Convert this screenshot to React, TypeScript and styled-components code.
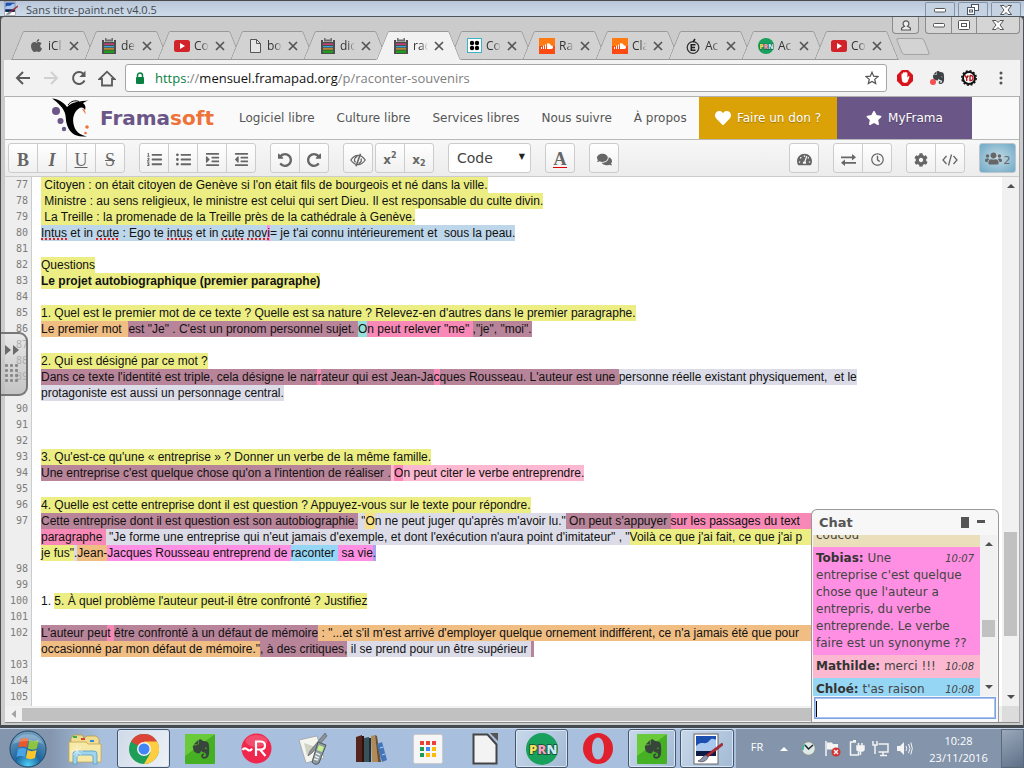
import React from 'react';
import styled, { createGlobalStyle, css } from 'styled-components';
import { FaHeart, FaStar, FaListOl, FaListUl, FaIndent, FaOutdent, FaComments, FaTachometerAlt, FaRegClock, FaCog, FaUsers, FaApple, FaEvernote } from 'react-icons/fa';

const sans = '"DejaVu Sans", sans-serif';
const system = '"Open Sans", "Noto Sans", sans-serif';

const GlobalStyle = createGlobalStyle`
  * { box-sizing: border-box; }
  body { margin: 0; overflow: hidden; font-family: ${sans}; }
  button, input, select { font: inherit; color: inherit; margin: 0; }
  button { padding: 0; border: 0; background: none; display: flex; align-items: center; justify-content: center; }
  a { color: inherit; text-decoration: none; }
  svg { display: block; flex: none; }
`;

const Desktop = styled.div`
  display: flex;
  flex-direction: column;
  height: 100vh;
  background: #4b4f57;
`;

/* ---------- outer title bar ---------- */

const TitleBar = styled.header`
  display: flex;
  align-items: center;
  height: 17px;
  padding: 0 3px;
  gap: 8px;
  border-top: 1px solid #4a4a4a;
  border-bottom: 1px solid #4f565e;
  background: linear-gradient(#b9c6d8, #cddcea);
  font: 11px/15px ${system};
  color: #45494f;
`;

const TitleText = styled.span`
  flex: 1;
  padding-top: 2px;
  white-space: nowrap;
`;

const TitleButtons = styled.div`
  display: flex;
  align-self: stretch;
  gap: 3px;
  padding-top: 1px;
`;

const TitleButton = styled.button`
  width: 30px;
  border: 1px solid #8593a8;
  border-bottom: 0;
  border-radius: 2px 2px 0 0;
  background: #c5d2e2;
`;

/* ---------- browser ---------- */

const Browser = styled.main`
  display: flex;
  flex-direction: column;
  flex: 1;
  min-height: 0;
  margin-right: 1px;
  padding: 0 3px 2px 3px;
  border-left: 1px solid #4c4c4c;
  border-bottom: 3px solid #44484f;
  border-radius: 4px 4px 0 0;
  background: #cbcbcb;
  position: relative;
`;

const TabStrip = styled.div`
  display: flex;
  align-items: flex-end;
  height: 43px;
  padding-left: 7px;
  position: relative;
`;

const Tab = styled.div<{ $active?: boolean }>`
  position: relative;
  z-index: ${p => (p.$active ? 2 : 0)};
  display: flex;
  align-items: center;
  flex: none;
  width: 85px;
  height: 29px;
  margin-right: -12px;
  padding-left: 17px;
  isolation: isolate;
  font: 12px/16px ${system};
  color: #333;
  &::before, &::after {
    content: '';
    position: absolute;
    z-index: -1;
    top: 0;
    bottom: 0;
    width: 48px;
    border-top: 1px solid #999;
    border-bottom: 1px solid ${p => (p.$active ? '#f2f2f2' : '#999')};
    background: ${p => (p.$active ? '#f2f2f2' : '#d2d2d2')};
  }
  &::before {
    left: 6px;
    border-left: 1px solid #999;
    border-top-left-radius: 2px;
    transform: skewX(-22deg);
  }
  &::after {
    right: 6px;
    border-right: 1px solid #999;
    border-top-right-radius: 2px;
    transform: skewX(22deg);
  }
`;

const TabLabel = styled.span`
  width: 15px;
  margin: 0 6px 0 4px;
  overflow: hidden;
  white-space: nowrap;
  mask-image: linear-gradient(90deg, #000 50%, transparent);
`;

const TabIcon = styled.span`
  display: flex;
  justify-content: center;
  width: 16px;
`;

const NewTab = styled.button`
  width: 28px;
  height: 17px;
  margin: 0 0 5px 12px;
  border: 1px solid #a4a4a4;
  border-radius: 3px;
  background: #d3d3d3;
  transform: skewX(22deg);
`;

const BrowserButtons = styled.div`
  position: absolute;
  top: 0;
  right: 0;
  display: flex;
  gap: 6px;
`;

const ButtonCluster = styled.div`
  display: flex;
  height: 17px;
  border: 1px solid #8b8b8b;
  border-top: 0;
  border-radius: 0 0 4px 4px;
  background: #d5d5d5;
  button + button { border-left: 1px solid #8b8b8b; }
`;

const ClusterButton = styled.button<{ $wide?: boolean }>`
  width: ${p => (p.$wide ? 43 : 25)}px;
`;

const NavBar = styled.div`
  display: flex;
  align-items: center;
  height: 36px;
  padding-left: 5px;
  background: #f2f2f2;
  color: #5a5a5a;
`;

const NavButton = styled.button`
  width: 28px;
  height: 28px;
`;

const AddressBar = styled.div`
  display: flex;
  align-items: center;
  flex: 1;
  height: 28px;
  margin-left: 4px;
  padding: 0 7px 0 9px;
  gap: 10px;
  border: 1px solid #a6a6a6;
  border-radius: 3px;
  background: #fff;
`;

const Url = styled.span`
  flex: 1;
  font: 13px/20px ${system};
  color: #808080;
  white-space: nowrap;
  b { font-weight: 400; color: #111; }
  i { font-style: normal; color: #0b8043; }
`;

const Extensions = styled.div`
  display: flex;
  padding: 0 3px 0 2px;
`;

const ExtButton = styled.button`
  width: 32px;
  height: 28px;
`;

/* ---------- web page ---------- */

const Page = styled.div`
  position: relative;
  display: flex;
  flex-direction: column;
  flex: 1;
  min-height: 0;
  margin-left: 1px;
  border-top: 1px solid #b0b0b0;
  border-bottom: 1px solid #888;
  border-right: 1px solid #aaa;
  background: #fff;
`;

const SiteHeader = styled.nav`
  display: flex;
  align-items: center;
  height: 43px;
  padding-left: 46px;
  border-bottom: 1px solid #b8b8b8;
  background: #fafafa;
  font: 12px/16px ${sans};
  color: #555;
  white-space: nowrap;
`;

const Brand = styled.a`
  display: flex;
  align-items: center;
  gap: 9px;
  height: 42px;
  margin-right: 25px;
  font: bold 20px/24px ${sans};
  color: #6a5687;
  span { color: #ee7338; }
`;

const SiteLink = styled.a`
  margin-right: 22px;
  &:last-of-type { margin-right: 0; }
`;

const SiteLinks = styled.div`
  display: flex;
  width: 460px;
`;

const Callout = styled.a<{ $color: string; $width: number }>`
  display: flex;
  align-items: center;
  justify-content: center;
  gap: 6px;
  width: ${p => p.$width}px;
  height: 42px;
  background: ${p => p.$color};
  color: #fff;
  text-shadow: 0 1px 1px rgba(0, 0, 0, 0.3);
`;

const Toolbar = styled.div`
  display: flex;
  align-items: center;
  height: 37px;
  padding: 0 3px;
  border-bottom: 1px solid #ccc;
  background: linear-gradient(#f7f7f7, #ececec);
  color: #666;
`;

const ToolGroup = styled.div<{ $gap?: number }>`
  display: flex;
  height: 30px;
  margin-right: ${p => p.$gap ?? 14}px;
  border: 1px solid #ccc;
  border-radius: 3px;
  background: linear-gradient(#fff, #f0f0f0);
  button + button { border-left: 1px solid #ccc; }
`;

const ToolButton = styled.button`
  width: 29px;
  padding-top: 3px;
  font: bold 12px/16px ${sans};
  &:first-child { width: 28px; }
  sup, sub { font-size: 8px; line-height: 8px; }
  sup { margin-bottom: 7px; }
  sub { margin-top: 8px; }
`;

const Letter = styled.span<{ $kind?: 'italic' | 'underline' | 'strike' }>`
  font: bold 18px/20px "Liberation Serif", serif;
  ${p => p.$kind === 'italic' && css`font-style: italic;`}
  ${p => p.$kind === 'underline' && css`font-weight: 400; text-decoration: underline 1px;`}
  ${p => p.$kind === 'strike' && css`font-weight: 400; text-decoration: line-through;`}
`;

const ColorLetter = styled.span`
  width: 14px;
  border-bottom: 1px solid #e00000;
  font: bold 18px/16px "Liberation Serif", serif;
  text-align: center;
`;

const StyleSelect = styled.label`
  position: relative;
  margin-right: 14px;
  select {
    width: 83px;
    height: 30px;
    padding: 0 8px;
    border: 1px solid #ccc;
    border-radius: 3px;
    background: #fff;
    color: #444;
    font: 14px/20px ${sans};
    appearance: none;
  }
  &::after {
    content: '▼';
    position: absolute;
    right: 6px;
    top: 8px;
    font: 8px/12px ${sans};
    color: #222;
    pointer-events: none;
  }
`;

const Spacer = styled.div`
  flex: 1;
`;

const UsersButton = styled.button`
  width: 37px;
  height: 30px;
  gap: 2px;
  border: 1px solid #bcc6cc;
  border-radius: 3px;
  background: radial-gradient(#c3dbe6, #6fa9c6);
  font: 11px/14px ${sans};
  span { padding-top: 5px; }
`;

/* ---------- editor ---------- */

const EditorArea = styled.div`
  display: flex;
  flex: 1;
  min-height: 0;
`;

const Editor = styled.div`
  flex: 1;
  min-width: 0;
  overflow: hidden;
  background: linear-gradient(90deg, #eee 26px, #ccc 26px, #ccc 27px, #fff 27px);
`;

const Line = styled.div`
  display: grid;
  grid-template-columns: 36px 1fr;
  min-height: 16px;
  font: 12px/16px "Liberation Sans", Arial, sans-serif;
  color: #111;
`;

const LineNumber = styled.span`
  padding-right: 13px;
  font: 10px/16px "DejaVu Sans Mono", monospace;
  color: #7c7c7c;
  text-align: right;
`;

const LineText = styled.div`
  white-space: pre;
`;

const Mark = styled.span<{ $color: string; $bold?: boolean }>`
  padding: 1px 0;
  background: ${p => p.$color};
  font-weight: ${p => (p.$bold ? 700 : 400)};
`;

const Misspelt = styled.span`
  text-decoration: underline dotted #e02020 2px;
  text-decoration-skip-ink: none;
`;

const ScrollY = styled.div<{ $thumbTop: number; $thumbHeight: number }>`
  flex: none;
  display: flex;
  flex-direction: column;
  align-items: center;
  justify-content: space-between;
  width: 17px;
  padding: 5px 0;
  background:
    linear-gradient(#c1c1c1, #c1c1c1) 50% ${p => p.$thumbTop}px / 13px ${p => p.$thumbHeight}px no-repeat,
    #f1f1f1;
`;

const ScrollX = styled.div`
  display: flex;
  align-items: center;
  height: 16px;
  padding-left: 5px;
  gap: 4px;
  background: #f1f1f1;
`;

const ThumbX = styled.div`
  flex: 1;
  height: 13px;
  margin-right: 8px;
  background: #c1c1c1;
`;

const ScrollCorner = styled.div`
  width: 17px;
  height: 16px;
  background: #dcdcdc;
`;

/* ---------- chat ---------- */

const Chat = styled.section`
  position: absolute;
  right: 20px;
  bottom: 0;
  width: 188px;
  border: 1px solid #999;
  border-bottom: 0;
  border-radius: 6px 6px 0 0;
  background: #f7f7f7;
  color: #444;
  font: 12px/17px ${sans};
`;

const ChatHeader = styled.header`
  display: flex;
  align-items: center;
  height: 25px;
  padding: 0 13px 0 7px;
  gap: 8px;
  h2 { flex: 1; margin: 0; font: bold 13px/18px ${sans}; color: #555; }
`;

const ChatBody = styled.div`
  display: flex;
  height: 161px;
  margin: 0 1px;
  overflow: hidden;
`;

const Messages = styled.div`
  flex: 1;
  margin-top: -11px;
`;

const Message = styled.p<{ $color: string }>`
  margin: 0;
  padding: 3px 6px 3px 3px;
  background: ${p => p.$color};
  b { color: #333; }
  time { float: right; font: italic 10px/17px ${sans}; }
`;

const ChatInput = styled.input`
  display: block;
  width: 182px;
  height: 22px;
  margin: 1px 0 3px 2px;
  padding: 0 1px;
  border: 1px solid #7ba3e2;
  outline: 1px solid #a9c4ef;
  outline-offset: -2px;
  background: #fff;
`;

const ChatInputRow = styled.label`
  position: relative;
  display: block;
  &::before {
    content: '';
    position: absolute;
    left: 4px;
    top: 4px;
    width: 1px;
    height: 16px;
    background: #000;
  }
`;

/* ---------- floating drawer handle ---------- */

const Drawer = styled.button`
  position: absolute;
  z-index: 3;
  left: 0;
  top: 315px;
  flex-direction: column;
  width: 27px;
  height: 64px;
  gap: 8px;
  padding-right: 4px;
  border: 2px solid #777;
  border-left: 0;
  border-radius: 0 9px 9px 0;
  background: linear-gradient(rgba(225, 225, 225, 0.5), rgba(185, 185, 185, 0.8));
`;

/* ---------- taskbar ---------- */

const Taskbar = styled.footer`
  display: flex;
  align-items: stretch;
  height: 40px;
  border-top: 1px solid #c4d4e6;
  background: linear-gradient(90deg, #8496ae 0, #8496ae 50px, #a8c0dd 100px);
`;

const TaskButton = styled.button<{ $open?: boolean; $front?: boolean; $width?: number }>`
  width: ${p => p.$width ?? 57}px;
  ${p => p.$open && css`
    margin: 0 2px;
    border: 1px solid #47576b;
    border-radius: 3px;
    background: linear-gradient(120deg, #c8d8ea, #a3bad5);
    box-shadow: inset 0 0 0 1px #d9e5f2;
  `}
  ${p => p.$front && css`background: linear-gradient(120deg, #cfd9e8, #eef2f8);`}
`;

const Tray = styled.div`
  display: flex;
  align-items: center;
  flex: 1;
  padding-left: 14px;
  background: #8394ab;
  color: #fff;
  font: 11px/17px ${system};
`;

const Language = styled.button`
  width: 14px;
  height: 16px;
  margin: 0 8px 4px 0;
`;

const TrayButton = styled.button`
  width: 24px;
`;

const Clock = styled.time`
  flex: 1;
  text-align: center;
  white-space: pre;
`;

const ShowDesktop = styled.button`
  align-self: stretch;
  width: 23px;
  border: 1px solid #5b6879;
  background: linear-gradient(150deg, #9aa8ba, #5f7087);
`;

/* ---------- icons ---------- */

const Pad = () => (
  <svg width="14" height="16" viewBox="0 0 14 16">
    <path d="M0 2h14v14H0z" fill="#4d4d4d" />
    <path d="M2 2h10v2H2z" fill="#cfcfcf" />
    <path d="M3 0h1.500v1.500h5V0H11v3.500H3z" fill="#6d6d6d" />
    <path d="M2 5.500h10v1.300H2z" fill="#e0407f" />
    <path d="M2 8h10v1.300H2z" fill="#35a8e0" />
    <path d="M2 10.300h10v1.200H2z" fill="#e8a020" />
    <path d="M2 12.500h10V15H2z" fill="#1f9c1f" />
  </svg>
);
const YouTube = () => (
  <svg width="16" height="12" viewBox="0 0 16 12">
    <rect width="16" height="12" rx="2.500" fill="#d2232a" />
    <path d="M6 3l5 3-5 3z" fill="#fff" />
  </svg>
);
const Sheet = () => (
  <svg width="11" height="14" viewBox="0 0 11 14" fill="#e6e6e6" stroke="#555">
    <path d="M.5.5h6l4 4v9H.5z" />
    <path d="M6.500.5v4h4" fill="none" />
  </svg>
);
const Dots4 = () => (
  <svg width="15" height="15" viewBox="0 0 15 15">
    <rect x=".5" y=".5" width="14" height="14" fill="#fff" stroke="#3fb3c2" />
    <circle cx="5" cy="5" r="2.200" /><circle cx="10" cy="5" r="2.200" />
    <circle cx="5" cy="10" r="2.200" /><circle cx="10" cy="10" r="2.200" />
  </svg>
);
const SoundCloud = () => (
  <svg width="16" height="16" viewBox="0 0 16 16">
    <rect width="16" height="8" fill="#ff7a12" /><rect y="8" width="16" height="8" fill="#fb4a12" />
    <path d="M2.500 9v2M4.500 7.500V11M6.500 6.500V11" stroke="#fff" />
    <path d="M8 11V5.600c2-.8 3.500.3 3.800 2 3-.4 3 3.400.6 3.400z" fill="#fff" />
  </svg>
);
const Academy = () => (
  <svg width="14" height="16" viewBox="0 0 14 16">
    <circle cx="7" cy="9.500" r="5.800" fill="none" stroke="#333" strokeWidth="1.300" />
    <path d="M9.500 6.700H5.300v5.600h4.200M5 9.500h4M7 4l2-3" fill="none" stroke="#222" strokeWidth="1.600" />
  </svg>
);
const Prn = ({ size }: { size: number }) => (
  <svg width={size} height={size} viewBox="0 0 32 32">
    <circle cx="16" cy="16" r="16" fill="#18a05c" />
    <g fontFamily="Open Sans, sans-serif" fontWeight="800" fontSize="13" stroke="#174a33" strokeWidth="1.500" paintOrder="stroke" textAnchor="middle">
      <text x="7" y="21" fill="#f6e05c">P</text><text x="16" y="21" fill="#f7a1c0">R</text><text x="26" y="21" fill="#c8ecf7">N</text>
    </g>
  </svg>
);
const Close = () => (
  <svg width="10" height="10" viewBox="0 0 10 10" stroke="#555" strokeWidth="1.700"><path d="M1 1l8 8M9 1L1 9" /></svg>
);
const PaintNet = ({ size }: { size: number }) => (
  <svg width={size} height={size} viewBox="0 0 32 32">
    <rect x="3" y="1" width="24" height="30" fill="#fff" stroke="#666" />
    <rect x="5" y="3" width="20" height="20" fill="#1d4fb0" />
    <path d="M5 13c6-6 9 0 13-5s6 0 7-2v12H5z" fill="#a9c8ee" />
    <path d="M5 18h20v5H5z" fill="#0c1c44" />
    <path d="M31 10L15 22l2 2 15-12z" fill="#b42836" stroke="#6b1420" strokeWidth=".5" />
    <path d="M15 22c-4 1-4 5-8 6 4 2 9 0 10-4z" fill="#8b98ad" stroke="#333" strokeWidth=".6" />
  </svg>
);
const Minimise = () => (
  <svg width="12" height="6" viewBox="0 0 12 6"><rect x=".5" y="1.500" width="11" height="3.500" rx="1" fill="#fff" stroke="#555" /></svg>
);
const Restore = () => (
  <svg width="12" height="11" viewBox="0 0 12 11" fill="#fff" stroke="#4c5566">
    <rect x="4.500" y=".5" width="7" height="6" /><rect x=".5" y="3.500" width="7" height="7" /><rect x="2.500" y="6" width="3" height="2" />
  </svg>
);
const Maximise = () => (
  <svg width="12" height="10" viewBox="0 0 12 10" fill="#fff" stroke="#555">
    <rect x=".5" y=".5" width="11" height="9" rx="1" /><rect x="3.500" y="3.500" width="5" height="3" />
  </svg>
);
const BigClose = () => (
  <svg width="12" height="10" viewBox="0 0 12 10" fill="#fff" stroke="#555">
    <path d="M.5.500h3.500l2 2 2-2h3.500L8 5l3.500 4.500H8l-2-2-2 2H.5L4 5z" />
  </svg>
);
const Person = () => (
  <svg width="10" height="11" viewBox="0 0 10 11" fill="#eee" stroke="#555" strokeWidth="1.200">
    <path d="M.6 10V8l2.900-1.800A2.900 2.900 0 1 1 6.500 6.200L9.400 8v2z" />
  </svg>
);
const Arrow = ({ flip, color }: { flip?: boolean; color: string }) => (
  <svg width="16" height="14" viewBox="0 0 16 14" fill="none" stroke={color} strokeWidth="2">
    <path d={flip ? 'M1 7h13M8 1l6 6-6 6' : 'M15 7H2M8 1L2 7l6 6'} />
  </svg>
);
const Reload = () => (
  <svg width="16" height="16" viewBox="0 0 16 16"><path d="M13.500 10.500A6 6 0 1 1 12.300 3.800" fill="none" stroke="#5a5a5a" strokeWidth="2" /><path d="M14.500.8v6.200H8.300z" fill="#5a5a5a" /></svg>
);
const Home = () => (
  <svg width="18" height="17" viewBox="0 0 18 17"><path d="M1.500 9L9 1.700 16.500 9H14v6.500H4V9z" fill="none" stroke="#5a5a5a" strokeWidth="1.800" /></svg>
);
const Lock = () => (
  <svg width="10" height="13" viewBox="0 0 10 13"><path d="M2.500 6V3.500a2.500 2.500 0 0 1 5 0V6" fill="none" stroke="#0b8043" strokeWidth="1.500" /><rect x="1" y="5" width="8" height="7" rx="1" fill="#0b8043" /></svg>
);
const StarOutline = () => (
  <svg width="14" height="14" viewBox="0 0 14 14"><path d="M7 1.200l1.700 4 4.300.4-3.300 2.800 1 4.200L7 10.400l-3.700 2.200 1-4.200L1 5.600l4.300-.4z" fill="none" stroke="#555" strokeWidth="1.200" /></svg>
);
const AdBlock = () => (
  <svg width="16" height="16" viewBox="0 0 16 16">
    <path d="M5 0h6l5 5v6l-5 5H5l-5-5V5z" fill="#d7141c" />
    <path d="M4.500 7.500V4.300a.7.7 0 0 1 1.400 0V3a.7.7 0 0 1 1.500 0v-.3a.7.7 0 0 1 1.500 0V3a.7.7 0 0 1 1.500 0v4.500l1.200-1.200c.8-.3 1 .5.700 1L10.500 12c-.7 1-4.500 1-5.200-.6z" fill="#fff" />
  </svg>
);
const Clipper = () => (
  <svg width="16" height="16" viewBox="0 0 16 16"><g transform="translate(2 0)"><FaEvernote size={15} color="#3d4144" /></g><circle cx="4" cy="12" r="3" fill="#f4504f" /></svg>
);
const Gearish = () => (
  <svg width="16" height="16" viewBox="0 0 16 16">
    <circle cx="8" cy="8" r="6" fill="#fff" stroke="#111" strokeWidth="2" /><circle cx="8" cy="8" r="7.200" fill="none" stroke="#111" strokeWidth="1.500" strokeDasharray="2 1.800" />
    <path d="M4 5.500l1.700 2.500 1.700-2.500M5.700 8v3M9 5.500v5q3 .3 3-2.500t-3-2.500" fill="none" stroke="#b8141c" strokeWidth="1.400" />
  </svg>
);
const Menu = () => (
  <svg width="4" height="14" viewBox="0 0 4 14" fill="#555"><circle cx="2" cy="2" r="1.500" /><circle cx="2" cy="7" r="1.500" /><circle cx="2" cy="12" r="1.500" /></svg>
);
const FramaLogo = () => (
  <svg width="40" height="40" viewBox="0 0 40 40">
    <g fill="#6a5687"><circle cx="5" cy="13" r="4" /><circle cx="9.500" cy="23" r="3" /><circle cx="13" cy="31" r="2.200" /></g>
    <path d="M1 .6C7 1 12 4 16 9c5-5 13-6 22-6.400-3 .8-5 1.600-6 2.600 2.500 1.500 3 4 2 7-1-3-4-3.500-6.500-1.500-5 4-6.500 10-4.500 17 1.500 5.500 5 9 13 10.600C24 40 17.500 34 15.500 25c-1.500-7 1.500-13-14.500-24.400z" />
    <path d="M17 7c3-4 7-5 11-3.500" fill="none" stroke="#000" />
    <path d="M31 11c2 0 4 2 3.500 5.500-1-2-2-3.500-3.500-5.500z" fill="#ee7338" />
    <g fill="#ee7338"><circle cx="36" cy="29" r="1.800" /><circle cx="34.500" cy="35" r="1.300" /></g>
  </svg>
);
const EyeSlash = () => (
  <svg width="16" height="14" viewBox="0 0 16 14" fill="none" stroke="#666" strokeWidth="1.300">
    <path d="M.8 7Q4 2.300 8 2.300T15.200 7Q12 11.700 8 11.700T.8 7z" />
    <path d="M5.500 9.500A3.500 3.500 0 0 1 7.500 3.500M8.500 10.500a3.500 3.500 0 0 0 2.500-5" />
    <path d="M10.500.8L6 13.200" strokeWidth="1.600" />
  </svg>
);
const Rotate = ({ flip }: { flip?: boolean }) => (
  <svg width="14" height="14" viewBox="0 128 1536 1536" fill="#666">
    <path transform={flip ? 'translate(1536 0) scale(-1 1)' : undefined} d="M1536 896q0 156-61 298t-164 245-245 164-298 61q-172 0-327-72.500t-264-204.500q-7-10-6.500-22.500t8.500-20.500l137-138q10-9 25-9 16 2 23 12 73 95 179 147t225 52q104 0 198.500-40.500t163.500-109.500 109.500-163.500 40.500-198.500-40.500-198.500-109.500-163.500-163.500-109.500-198.500-40.500q-98 0-188 35.500t-160 101.500l137 138q31 30 14 69-17 40-59 40h-448q-26 0-45-19t-19-45v-448q0-42 40-59 39-17 69 14l130 129q107-101 244.500-156.500t284.500-55.500q156 0 298 61t245 164 164 245 61 298z" />
  </svg>
);
const Exchange = () => (
  <svg width="15" height="12" viewBox="0 0 15 12" fill="#666"><path d="M0 2.500h11V0l4 3.300-4 3.300V4.300H0zM15 9.800H4V12L0 8.800l4-3.300V8h11z" /></svg>
);
const CodeBrackets = () => (
  <svg width="16" height="12" viewBox="0 0 16 12" fill="none" stroke="#666" strokeWidth="1.300"><path d="M4.500 2L1 6l3.500 4M11.500 2L15 6l-3.500 4M9.500.5l-3 11" /></svg>
);
const Triangle = ({ dir, color = '#505050' }: { dir: 'up' | 'down' | 'left'; color?: string }) => (
  <svg width="8" height="8" viewBox="0 0 8 8" fill={color}>
    <path d={{ up: 'M4 2l4 4H0z', down: 'M4 6l4-4H0z', left: 'M1.500 4L6 0v8z' }[dir]} />
  </svg>
);
const DrawerGlyph = () => (
  <svg width="16" height="40" viewBox="0 0 16 40">
    <path d="M1 1l6 5-6 5zM9 1l6 5-6 5z" fill="#6a6a6a" />
    <g fill="#888">{[20, 25, 30, 35].flatMap(y => [1, 6, 11].map(x => <rect key={`${x}-${y}`} x={x} y={y} width="3" height="3" rx="1" />))}</g>
  </svg>
);
const WindowsOrb = () => (
  <svg width="38" height="38" viewBox="0 0 38 38">
    <defs><radialGradient id="orb" cx=".5" cy=".95" r=".9"><stop offset="0" stopColor="#4fd0f5" /><stop offset=".4" stopColor="#1d66a0" /><stop offset="1" stopColor="#6f9cbd" /></radialGradient></defs>
    <circle cx="19" cy="19" r="18" fill="url(#orb)" stroke="#22435f" />
    <path d="M11 9.500c3-2 5.500-2 8.500-.5l-1.700 8.500c-3-1.500-5.500-1.500-8.500 0z" fill="#e8582a" />
    <path d="M20.500 10c3 1.500 5.500 1.500 9 0l-1.700 8.500c-3 1.500-5.500 1.500-9 0z" fill="#8cc63e" />
    <path d="M9 19c3-1.500 5.500-1.500 8.500 0L16 27c-3-1.500-5.500-1.500-8.500 0z" fill="#4aa5e6" />
    <path d="M18.500 20c3 1.500 5.500 1.500 9 0L26 28c-3 1.500-5.500 1.500-9 0z" fill="#fbc62c" />
    <path d="M4 14C8 1 30 1 34 14c-8-4-22-4-30 0z" fill="#fff" opacity=".25" />
  </svg>
);
const Explorer = () => (
  <svg width="34" height="32" viewBox="0 0 34 32">
    <path d="M3 5l3-3h8l2 3 3-2h9l3 3v22H3z" fill="#f0dc8e" stroke="#b89b45" strokeWidth=".8" />
    <path d="M5 3h4v2H5z" fill="#35b04a" /><path d="M13 5h4v2h-4z" fill="#d8402f" /><path d="M22 7h4v2h-4z" fill="#3a86d6" />
    <path d="M1 9h17l2 2h13v18H1z" fill="#f6e8a6" stroke="#c4a850" strokeWidth=".8" />
    <path d="M5 31V21q0-3 3-3h18q3 0 3 3v10h-4v-7q0-2-2-2H11q-2 0-2 2v7z" fill="#9ed4ee" stroke="#5c9dc2" strokeWidth=".8" />
    <path d="M9 12v12M3 18h12M5 14l8 8M13 14l-8 8" stroke="#fff" strokeWidth=".8" opacity=".7" />
  </svg>
);
const Chrome = () => (
  <svg width="30" height="30" viewBox="0 0 30 30">
    <circle cx="15" cy="15" r="15" fill="#1e9e57" />
    <path d="M15 15L2 7.500A15 15 0 0 1 28 7.500z" fill="#db4437" />
    <path d="M15 30A15 15 0 0 0 28 7.500H15l6.500 11.300z" fill="#fecd40" />
    <circle cx="15" cy="15" r="7" fill="#f1f1f1" /><circle cx="15" cy="15" r="5.500" fill="#4285f4" />
  </svg>
);
const Evernote = () => (
  <svg width="30" height="30" viewBox="0 0 30 30">
    <rect width="30" height="30" rx="1" fill="#46b025" /><path d="M0 0h30L0 22z" fill="#6acb3a" />
    <g transform="translate(5 4)"><FaEvernote size={22} color="#37453a" /></g>
  </svg>
);
const RealPlayer = () => (
  <svg width="31" height="31" viewBox="0 0 31 31">
    <circle cx="15.500" cy="15.500" r="15" fill="#f0274d" /><ellipse cx="15.500" cy="8" rx="11" ry="6" fill="#fff" opacity=".18" />
    <path d="M1.500 17c2-3 4-1 5.500 0 1.500 1 3 .5 4-1.500M15 23V8.500h5q4 .3 4 4t-4 4h-4.500M19 16.500l5.500 6.500" fill="none" stroke="#fff" strokeWidth="2.200" />
  </svg>
);
const Phone = () => (
  <svg width="32" height="32" viewBox="0 0 32 32">
    <path d="M1 7l18-4 7 22-18 5z" fill="#f5f5f0" stroke="#999" strokeWidth=".7" /><path d="M6 10l15 5-12 8z" fill="#cfd3c4" />
    <path d="M27 0L12 18l-2 5 4-3L29 3z" fill="#8b9299" stroke="#555" strokeWidth=".6" />
    <path d="M20 9l8 3-7 18q-4 3-7-1z" fill="#8d999e" stroke="#50595e" /><path d="M21 12l5 2-2 5-5-2z" fill="#c6ef8f" />
    <path d="M18 20l4 2M17 23l4 2M16 26l4 1" stroke="#e7eef0" strokeWidth="1.500" />
  </svg>
);
const Books = () => (
  <svg width="32" height="30" viewBox="0 0 32 30">
    <path d="M1 3l6-2v27H1z" fill="#55241c" /><path d="M7 2h2v26H7z" fill="#31110e" /><path d="M9 4l5-1v25H9z" fill="#38545a" />
    <path d="M14 4h2v24h-2z" fill="#1e2d33" /><path d="M16 2l4-1 3 27h-6z" fill="#b08a58" /><path d="M20 1l2 1 4 26h-3z" fill="#6d5132" />
    <path d="M22 10l5-2 5 18-5 2z" fill="#4375bd" /><path d="M25 14l3-1M27 21l3-1" stroke="#b8cfee" />
  </svg>
);
const AppGrid = () => (
  <svg width="30" height="30" viewBox="0 0 30 30">
    <rect x=".5" y=".5" width="29" height="29" rx="2" fill="#f6f6f6" stroke="#ccc" />
    {['#ea4335', '#ea4335', '#ea4335', '#1a9e56', '#4285f4', '#fbbc05', '#1a9e56', '#fbbc05', '#fbbc05'].map((c, i) => (
      <rect key={i} x={7 + (i % 3) * 6} y={7 + Math.floor(i / 3) * 6} width="4" height="4" fill={c} />
    ))}
  </svg>
);
const LibreOffice = () => (
  <svg width="26" height="32" viewBox="0 0 26 32"><path d="M1.500 1.500h14l9 10v19h-23z" fill="#f3f3f3" stroke="#444" strokeWidth="2" /><path d="M18 0h8v8z" fill="#555" /></svg>
);
const Opera = () => (
  <svg width="30" height="31" viewBox="0 0 30 31"><path fillRule="evenodd" d="M15 0a15 15.500 0 1 0 0 31 15 15.500 0 1 0 0-31zm0 4.500c4 0 6 5 6 11s-2 11-6 11-6-5-6-11 2-11 6-11z" fill="#e0202c" /></svg>
);
const TrayGlyph = ({ kind }: { kind: 'gauge' | 'flag' | 'power' | 'net' | 'sound' }) => (
  <svg width="17" height="17" viewBox="0 0 17 17" fill="none" stroke="#f4f4f4" strokeWidth="1.500">
    {kind === 'gauge' && <><circle cx="8.500" cy="8.500" r="7" fill="#dde8e8" stroke="#8a9599" /><path d="M5 5l3.500 4L13 5" stroke="#222" /><path d="M3 10a5.500 5.500 0 0 1 2-5.500" stroke="#2fa89a" strokeWidth="1.500" /></>}
    {kind === 'flag' && <><path d="M2 1v15" /><path d="M3 2.500h5l1 1.500h5v7H9L8 9.500H3z" fill="#f4f4f4" stroke="none" /><circle cx="12" cy="12" r="4.500" fill="#d23430" stroke="none" /><path d="M10 10l4 4M14 10l-4 4" /></>}
    {kind === 'power' && <><path d="M8 2H2.500v13h8v-3M5 .8h3" /><path d="M9 6h7v3q0 2-2 2h-3q-2 0-2-2zM10.500 3v3M14 3v3M12.500 11v4" fill="#f4f4f4" /></>}
    {kind === 'net' && <><path d="M6.500 4H16v8H6.500M11 12v3M8 15.500h7" /><path d="M1 1v4h4V1M3 5v9" /></>}
    {kind === 'sound' && <><path d="M1 6h3l4-4v13l-4-4H1z" fill="#f4f4f4" stroke="none" /><path d="M10 6q1.500 2.500 0 5M12.500 4q3 4.500 0 9M14.800 2.500q3 6 0 12" strokeWidth="1" /></>}
  </svg>
);

/* ---------- data ---------- */

const tabs: { icon: React.ReactNode; label: string; active?: boolean }[] = [
  { icon: <FaApple size={15} color="#5c5c5c" />, label: 'iCl' },
  { icon: <Pad />, label: 'de' },
  { icon: <YouTube />, label: 'Co' },
  { icon: <Sheet />, label: 'bo' },
  { icon: <Pad />, label: 'dic' },
  { icon: <Pad />, label: 'rac', active: true },
  { icon: <Dots4 />, label: 'Co' },
  { icon: <SoundCloud />, label: 'Ra' },
  { icon: <SoundCloud />, label: 'Cla' },
  { icon: <Academy />, label: 'Ac' },
  { icon: <Prn size={16} />, label: 'Ac' },
  { icon: <YouTube />, label: 'Co' },
];

const author = {
  yellow: '#ecee84',
  mauve: '#b88499',
  orange: '#f0bd83',
  pink: '#f888b5',
  rose: '#fbb8d0',
  lavender: '#dcdce8',
  teal: '#93e0da',
  blue: '#bdd6e9',
  magenta: '#ff8fe2',
  sky: '#95d6f4',
  violet: '#a8a0f2',
  gold: '#f8e085',
  none: 'transparent',
};

type Run = [keyof typeof author, React.ReactNode, boolean?];

const lines: Run[][] = [
  [['yellow', " Citoyen : on était citoyen de Genève si l'on était fils de bourgeois et né dans la ville."]],
  [['yellow', ' Ministre : au sens religieux, le ministre est celui qui sert Dieu. Il est responsable du culte divin.']],
  [['yellow', ' La Treille : la promenade de la Treille près de la cathédrale à Genève.']],
  [
    ['blue', <><Misspelt>Intus</Misspelt> et in <Misspelt>cute</Misspelt> : Ego te <Misspelt>intus</Misspelt> et in <Misspelt>cute</Misspelt> <Misspelt>nov</Misspelt></>],
    ['magenta', <Misspelt>i</Misspelt>],
    ['blue', "= je t'ai connu intérieurement et  sous la peau."],
  ],
  [],
  [['yellow', 'Questions']],
  [['yellow', 'Le projet autobiographique (premier paragraphe)', true]],
  [],
  [['yellow', "1. Quel est le premier mot de ce texte ? Quelle est sa nature ? Relevez-en d'autres dans le premier paragraphe."]],
  [['orange', 'Le premier mot  '], ['mauve', 'est "Je" . C\'est un pronom personnel sujet. '], ['teal', 'O'], ['pink', 'n peut relever "me" '], ['mauve', ',"je", "moi".']],
  [],
  [['yellow', '2. Qui est désigné par ce mot ?']],
  [
    ['mauve', "Dans ce texte l'identité est triple, cela désigne le nar"], ['pink', 'r'], ['mauve', 'ateur qui est Jean-Ja'], ['pink', 'c'],
    ['mauve', "ques Rousseau. L'auteur est une "], ['lavender', 'personne réelle existant physiquement,  et le'], ['none', '\n'], ['lavender', 'protagoniste est aussi un personnage central.'],
  ],
  [],
  [],
  [],
  [['yellow', "3. Qu'est-ce qu'une « entreprise » ? Donner un verbe de la même famille."]],
  [['mauve', "Une entreprise c'est quelque chose qu'on a l'intention de réaliser ."], ['rose', ' '], ['pink', 'O'], ['rose', 'n peut citer le verbe entreprendre.']],
  [],
  [['yellow', '4. Quelle est cette entreprise dont il est question ? Appuyez-vous sur le texte pour répondre.']],
  [
    ['mauve', 'Cette entreprise dont il est question est son autobiographie.'], ['lavender', ' "'], ['gold', 'O'], ['lavender', 'n ne peut juger qu\'après m\'avoir lu."'],
    ['mauve', ' On peut s’appuyer '], ['pink', 'sur les passages du text      '], ['none', '\n'],
    ['pink', 'paragraphe '], ['lavender', ' "Je forme une entreprise qui n\'eut jamais d\'exemple, et dont l\'exécution n\'aura point d\'imitateur" , "'],
    ['yellow', "Voilà ce que j'ai fait, ce que j'ai p      "], ['none', '\n'],
    ['yellow', 'je fus"'], ['lavender', '.'], ['orange', 'Jean-'], ['magenta', 'Jacques Rousseau entreprend de '], ['sky', 'raconter '], ['magenta', ' sa vie'], ['violet', '.'],
  ],
  [],
  [],
  [['none', '1. '], ['yellow', "5. À quel problème l'auteur peut-il être confronté ? Justifiez"]],
  [],
  [
    ['mauve', "L'auteur peu"], ['pink', 't '], ['mauve', 'être confronté à un défaut de mémoire'],
    ['orange', ' : "...et s\'il m\'est arrivé d\'employer quelque ornement indifférent, ce n\'a jamais été que pour        '], ['none', '\n'],
    ['orange', 'occasionné par mon défaut de mémoire."'], ['mauve', ', à des critiques,'], ['lavender', ' il se prend pour un être supérieur '], ['mauve', ' '],
  ],
  [],
  [],
  [],
];

export default function App() {
  return (
    <>
      <GlobalStyle />
      <Desktop>
        <TitleBar>
          <PaintNet size={15} />
          <TitleText>Sans titre-paint.net v4.0.5</TitleText>
          <TitleButtons>
            <TitleButton aria-label="Réduire"><Minimise /></TitleButton>
            <TitleButton aria-label="Restaurer"><Restore /></TitleButton>
            <TitleButton aria-label="Fermer"><BigClose /></TitleButton>
          </TitleButtons>
        </TitleBar>

        <Browser>
          <TabStrip>
            {tabs.map((t, i) => (
              <Tab key={i} $active={t.active}>
                <TabIcon>{t.icon}</TabIcon>
                <TabLabel>{t.label}</TabLabel>
                <button aria-label="Fermer l'onglet"><Close /></button>
              </Tab>
            ))}
            <NewTab aria-label="Nouvel onglet" />
            <BrowserButtons>
              <ButtonCluster><ClusterButton aria-label="Profil"><Person /></ClusterButton></ButtonCluster>
              <ButtonCluster>
                <ClusterButton aria-label="Réduire"><Minimise /></ClusterButton>
                <ClusterButton aria-label="Agrandir"><Maximise /></ClusterButton>
                <ClusterButton aria-label="Fermer" $wide><BigClose /></ClusterButton>
              </ButtonCluster>
            </BrowserButtons>
          </TabStrip>

          <NavBar>
            <NavButton aria-label="Précédent"><Arrow color="#5a5a5a" /></NavButton>
            <NavButton aria-label="Suivant"><Arrow flip color="#d0d0d0" /></NavButton>
            <NavButton aria-label="Actualiser"><Reload /></NavButton>
            <NavButton aria-label="Accueil"><Home /></NavButton>
            <AddressBar>
              <Lock />
              <Url><i>https</i>://<b>mensuel.framapad.org</b>/p/raconter-souvenirs</Url>
              <button aria-label="Favori"><StarOutline /></button>
            </AddressBar>
            <Extensions>
              <ExtButton aria-label="Bloqueur"><AdBlock /></ExtButton>
              <ExtButton aria-label="Clipper"><Clipper /></ExtButton>
              <ExtButton aria-label="Extension"><Gearish /></ExtButton>
              <ExtButton aria-label="Menu"><Menu /></ExtButton>
            </Extensions>
          </NavBar>

          <Page>
            <SiteHeader>
              <Brand href="#"><FramaLogo /><div>Frama<span>soft</span></div></Brand>
              <SiteLinks>
                {['Logiciel libre', 'Culture libre', 'Services libres', 'Nous suivre', 'À propos'].map(l => (
                  <SiteLink key={l} href="#">{l}</SiteLink>
                ))}
              </SiteLinks>
              <Callout href="#" $color="#dba208" $width={138}><FaHeart size={16} />Faire un don ?</Callout>
              <Callout href="#" $color="#6a5687" $width={135}><FaStar size={16} />MyFrama</Callout>
            </SiteHeader>

            <Toolbar>
              <ToolGroup>
                <ToolButton aria-label="Gras"><Letter>B</Letter></ToolButton>
                <ToolButton aria-label="Italique"><Letter $kind="italic">I</Letter></ToolButton>
                <ToolButton aria-label="Souligné"><Letter $kind="underline">U</Letter></ToolButton>
                <ToolButton aria-label="Barré"><Letter $kind="strike">S</Letter></ToolButton>
              </ToolGroup>
              <ToolGroup>
                <ToolButton aria-label="Liste ordonnée"><FaListOl size={15} /></ToolButton>
                <ToolButton aria-label="Liste à puces"><FaListUl size={15} /></ToolButton>
                <ToolButton aria-label="Indenter"><FaIndent size={15} /></ToolButton>
                <ToolButton aria-label="Désindenter"><FaOutdent size={15} /></ToolButton>
              </ToolGroup>
              <ToolGroup>
                <ToolButton aria-label="Annuler"><Rotate /></ToolButton>
                <ToolButton aria-label="Rétablir"><Rotate flip /></ToolButton>
              </ToolGroup>
              <ToolGroup $gap={2}>
                <ToolButton aria-label="Effacer les couleurs"><EyeSlash /></ToolButton>
              </ToolGroup>
              <ToolGroup>
                <ToolButton aria-label="Exposant">x<sup>2</sup></ToolButton>
                <ToolButton aria-label="Indice">x<sub>2</sub></ToolButton>
              </ToolGroup>
              <StyleSelect><select aria-label="Style"><option>Code</option></select></StyleSelect>
              <ToolGroup><ToolButton aria-label="Couleur"><ColorLetter>A</ColorLetter></ToolButton></ToolGroup>
              <ToolGroup><ToolButton aria-label="Commentaires"><FaComments size={15} /></ToolButton></ToolGroup>
              <Spacer />
              <ToolGroup><ToolButton aria-label="Tableau de bord"><FaTachometerAlt size={15} /></ToolButton></ToolGroup>
              <ToolGroup>
                <ToolButton aria-label="Import/Export"><Exchange /></ToolButton>
                <ToolButton aria-label="Historique"><FaRegClock size={13} /></ToolButton>
              </ToolGroup>
              <ToolGroup>
                <ToolButton aria-label="Paramètres"><FaCog size={14} /></ToolButton>
                <ToolButton aria-label="Intégrer"><CodeBrackets /></ToolButton>
              </ToolGroup>
              <UsersButton aria-label="Utilisateurs"><FaUsers size={17} /><span>2</span></UsersButton>
            </Toolbar>

            <EditorArea>
              <Editor>
                {lines.map((runs, i) => (
                  <Line key={i}>
                    <LineNumber>{77 + i}</LineNumber>
                    <LineText>
                      {runs.map(([who, text, bold], j) => (
                        <Mark key={j} $color={author[who]} $bold={bold}>{text}</Mark>
                      ))}
                    </LineText>
                  </Line>
                ))}
              </Editor>
              <ScrollY $thumbTop={355} $thumbHeight={104}><Triangle dir="up" /><Triangle dir="down" /></ScrollY>
            </EditorArea>
            <ScrollX><Triangle dir="left" color="#a3a3a3" /><ThumbX /><ScrollCorner /></ScrollX>

            <Chat>
              <ChatHeader>
                <h2>Chat</h2>
                <button aria-label="Épingler"><svg width="8" height="11"><rect width="8" height="11" fill="#555" /></svg></button>
                <button aria-label="Réduire le chat"><svg width="8" height="8"><rect y="1" width="8" height="3" fill="#555" /></svg></button>
              </ChatHeader>
              <ChatBody>
                <Messages>
                  <Message $color="#eadfba">coucou</Message>
                  <Message $color={author.magenta}><time>10:07</time><b>Tobias:</b> Une entreprise c'est quelque chose que l'auteur a entrepris, du verbe entreprende. Le verbe faire est un synonyme ??</Message>
                  <Message $color={author.rose}><time>10:08</time><b>Mathilde:</b> merci !!!</Message>
                  <Message $color={author.sky}><time>10:08</time><b>Chloé:</b> t'as raison</Message>
                </Messages>
                <ScrollY $thumbTop={85} $thumbHeight={17}><Triangle dir="up" /><Triangle dir="down" /></ScrollY>
              </ChatBody>
              <ChatInputRow><ChatInput aria-label="Message" /></ChatInputRow>
            </Chat>
          </Page>
          <Drawer aria-label="Ouvrir le panneau"><DrawerGlyph /></Drawer>
        </Browser>

        <Taskbar>
          <TaskButton aria-label="Démarrer" $width={55}><WindowsOrb /></TaskButton>
          <TaskButton aria-label="Explorateur" $width={60}><Explorer /></TaskButton>
          <TaskButton aria-label="Chrome" $open $front $width={53}><Chrome /></TaskButton>
          <TaskButton aria-label="Evernote" $width={56}><Evernote /></TaskButton>
          <TaskButton aria-label="RealPlayer"><RealPlayer /></TaskButton>
          <TaskButton aria-label="Téléphone"><Phone /></TaskButton>
          <TaskButton aria-label="Bibliothèque"><Books /></TaskButton>
          <TaskButton aria-label="Applications"><AppGrid /></TaskButton>
          <TaskButton aria-label="LibreOffice"><LibreOffice /></TaskButton>
          <TaskButton aria-label="PRN" $open $width={53}><Prn size={32} /></TaskButton>
          <TaskButton aria-label="Opera" $width={56}><Opera /></TaskButton>
          <TaskButton aria-label="Evernote, notes" $open $width={48}><Evernote /></TaskButton>
          <TaskButton aria-label="paint.net" $open $width={54}><PaintNet size={32} /></TaskButton>
          <Tray>
            <Language>FR</Language>
            <TrayButton aria-label="Icônes cachées"><Triangle dir="up" color="#fff" /></TrayButton>
            <TrayButton aria-label="Performances"><TrayGlyph kind="gauge" /></TrayButton>
            <TrayButton aria-label="Alertes"><TrayGlyph kind="flag" /></TrayButton>
            <TrayButton aria-label="Alimentation"><TrayGlyph kind="power" /></TrayButton>
            <TrayButton aria-label="Réseau"><TrayGlyph kind="net" /></TrayButton>
            <TrayButton aria-label="Volume"><TrayGlyph kind="sound" /></TrayButton>
            <Clock>{'10:28\n23/11/2016'}</Clock>
            <ShowDesktop aria-label="Afficher le bureau" />
          </Tray>
        </Taskbar>
      </Desktop>
    </>
  );
}
